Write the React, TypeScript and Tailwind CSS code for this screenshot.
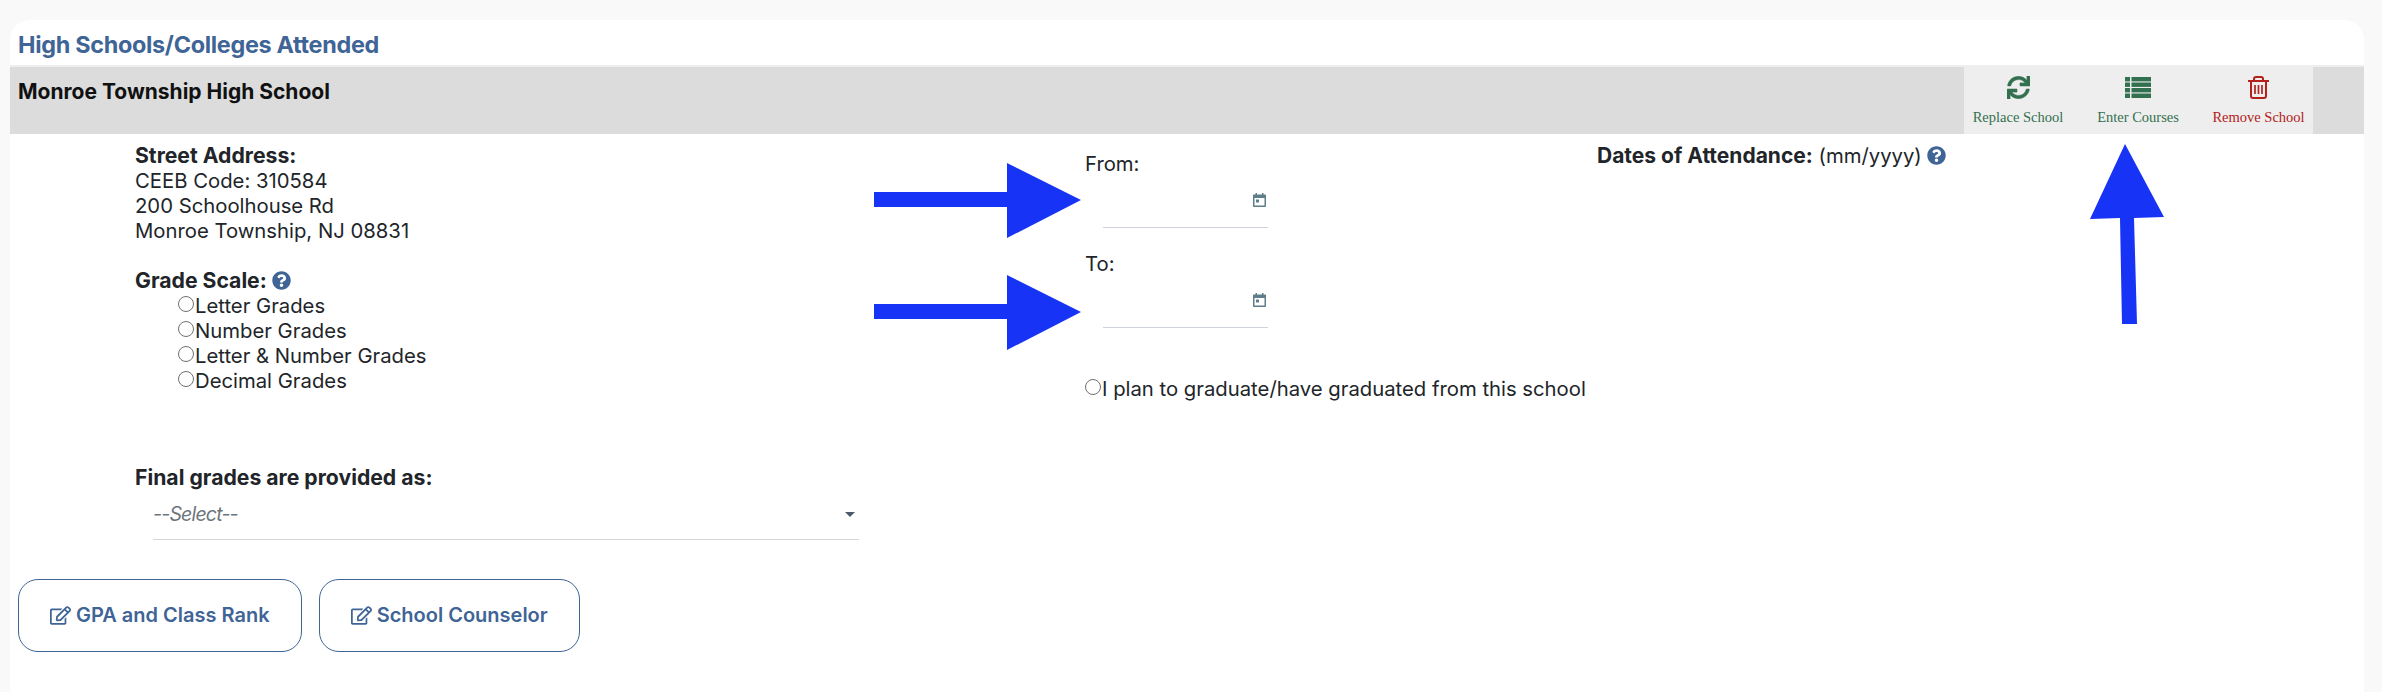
import { FaSync, FaRegEdit, FaQuestionCircle } from "react-icons/fa";

function Help() {
  return <FaQuestionCircle className="inline-block text-[#3f6496] text-[19px] align-[-2px]" />;
}

function Radio({ label }: { label: string }) {
  return (
    <label className="flex h-[25px] items-center">
      <input type="radio" className="appearance-none w-[16px] h-[16px] rounded-full border-[1.5px] border-[#707070] bg-white -mt-[3px] mr-[1px]" />
      <span>{label}</span>
    </label>
  );
}

function Action({ icon, label, color, width }: { icon: React.ReactNode; label: string; color: string; width: string }) {
  return (
    <button className={`flex flex-col items-center pt-[11px] ${width} ${color}`}>
      <span className="h-[23px] flex items-center justify-center">{icon}</span>
      <span className="mt-[10px] text-[14.5px] leading-[16px] font-['Liberation_Serif',serif] whitespace-nowrap">{label}</span>
    </button>
  );
}

function ListIcon() {
  return (
    <svg width="26" height="21" viewBox="0 0 26 21" fill="currentColor">
      <rect x="0" y="0" width="5" height="4.4" />
      <rect x="6.5" y="0" width="19.5" height="4.4" />
      <rect x="0" y="5.5" width="5" height="4.4" />
      <rect x="6.5" y="5.5" width="19.5" height="4.4" />
      <rect x="0" y="11" width="5" height="4.4" />
      <rect x="6.5" y="11" width="19.5" height="4.4" />
      <rect x="0" y="16.5" width="5" height="4.5" />
      <rect x="6.5" y="16.5" width="19.5" height="4.5" />
    </svg>
  );
}

function TrashIcon() {
  return (
    <svg width="21" height="23" viewBox="0 0 21 23" fill="none" stroke="currentColor" strokeWidth="2">
      <path d="M0 5H21" />
      <path d="M6 5V3C6 1.8 6.8 1 8 1H13C14.2 1 15 1.8 15 3V5" />
      <path d="M3 5V20C3 21.2 3.8 22 5 22H16C17.2 22 18 21.2 18 20V5" />
      <path d="M7 9V18M10.5 9V18M14 9V18" strokeWidth="1.7" />
    </svg>
  );
}

function CalendarIcon() {
  return (
    <svg width="13" height="14" viewBox="0 0 13 14" className="text-[#607d8b]" fill="currentColor">
      <rect x="2.5" y="0" width="1.5" height="2.5" />
      <rect x="9" y="0" width="1.5" height="2.5" />
      <path fillRule="evenodd" d="M1 1.5H12C12.6 1.5 13 1.9 13 2.5V13C13 13.6 12.6 14 12 14H1C.4 14 0 13.6 0 13V2.5C0 1.9 .4 1.5 1 1.5ZM1.5 5V12.5H11.5V5Z" />
      <rect x="3" y="6.5" width="3" height="3" />
    </svg>
  );
}

function DateField({ label }: { label: string }) {
  return (
    <div className="h-[100px]">
      <div className="h-[25px] leading-[25px]">{label}</div>
      <div className="ml-[18px] w-[165px] h-[52px] border-b border-[#ced4da] flex items-center justify-end pr-[2px] pb-[3px]">
        <CalendarIcon />
      </div>
    </div>
  );
}

function Outline({ label }: { label: string }) {
  return (
    <button className="h-[73px] px-[31px] rounded-[20px] border border-[#3f6496] text-[#3f6496] font-semibold flex items-center gap-[5px] text-[20px] whitespace-nowrap">
      <FaRegEdit className="text-[21px]" />
      {label}
    </button>
  );
}

export default function App() {
  return (
    <div className="min-h-[692px] bg-[#f9f9f9] pt-[20px] pl-[10px] pr-[18px] font-['Inter','Liberation_Sans',sans-serif] text-[20.3px] leading-[25px] text-[#212529]">
      <div className="bg-white rounded-t-[20px] h-[672px] overflow-hidden">
        <h2 className="h-[45px] pl-[8px] pt-[11px] text-[23.4px] leading-[28px] font-bold text-[#3f6496] tracking-[-0.3px]">
          High Schools/Colleges Attended
        </h2>
        <div className="flex h-[69px] bg-[#dcdcdc] border-t-2 border-[#eeeeee]">
          <div className="flex-1 pl-[8px] pt-[12px] font-bold text-[21px] text-[#111]">Monroe Township High School</div>
          <div className="flex bg-[#eeeeee] -mt-[2px] mr-[51px]">
            <Action icon={<FaSync className="text-[23px]" stroke="currentColor" strokeWidth="10" />} label="Replace School" color="text-[#33704f]" width="w-[108px]" />
            <Action icon={<ListIcon />} label="Enter Courses" color="text-[#33704f]" width="w-[132px]" />
            <Action icon={<TrashIcon />} label="Remove School" color="text-[#b3211a]" width="w-[109px]" />
          </div>
        </div>
        <div className="flex">
          <div className="w-[1075px] pl-[125px] pt-[9px]">
            <div className="font-bold text-[21.2px]">Street Address:</div>
            <div>CEEB Code: 310584</div>
            <div>200 Schoolhouse Rd</div>
            <div>Monroe Township, NJ 08831</div>
            <div className="mt-[25px] font-bold text-[21.2px]">
              Grade Scale: <Help />
            </div>
            <div className="pl-[43px]">
              <Radio label="Letter Grades" />
              <Radio label="Number Grades" />
              <Radio label="Letter &amp; Number Grades" />
              <Radio label="Decimal Grades" />
            </div>
            <div className="mt-[72px] font-bold text-[21.2px]">Final grades are provided as:</div>
            <div className="ml-[18px] mt-[2px] w-[706px] h-[48px] border-b border-[#d6d6d6] flex items-center justify-between pb-[3px] pr-[4px] italic text-[19.5px] tracking-[-0.8px] text-[#6c757d]">
              <span>--Select--</span>
              <span className="w-0 h-0 border-x-[5px] border-x-transparent border-t-[5px] border-t-[#4a5a68]" />
            </div>
          </div>
          <div className="w-[512px] pt-[17px]">
            <DateField label="From:" />
            <DateField label="To:" />
            <div className="mt-[25px]">
              <Radio label="I plan to graduate/have graduated from this school" />
            </div>
          </div>
          <div className="pt-[9px] whitespace-nowrap">
            <span className="font-bold text-[21px]">Dates of Attendance:</span> (mm/yyyy) <Help />
          </div>
        </div>
        <div className="flex gap-[17px] pl-[8px] mt-[39px]">
          <Outline label="GPA and Class Rank" />
          <Outline label="School Counselor" />
        </div>
      </div>
      <svg className="absolute left-0 top-0 pointer-events-none" width="2382" height="692" viewBox="0 0 2382 692">
        <polygon fill="#1733f5" points="874,192 1007,192 1007,163 1081,200 1007,238 1007,207 874,207" />
        <polygon fill="#1733f5" points="874,304 1007,304 1007,275 1081,312 1007,350 1007,319 874,319" />
        <polygon fill="#1733f5" points="2125,144 2164,217 2134,218 2137,324 2122,324 2120,218 2090,219" />
      </svg>
    </div>
  );
}
